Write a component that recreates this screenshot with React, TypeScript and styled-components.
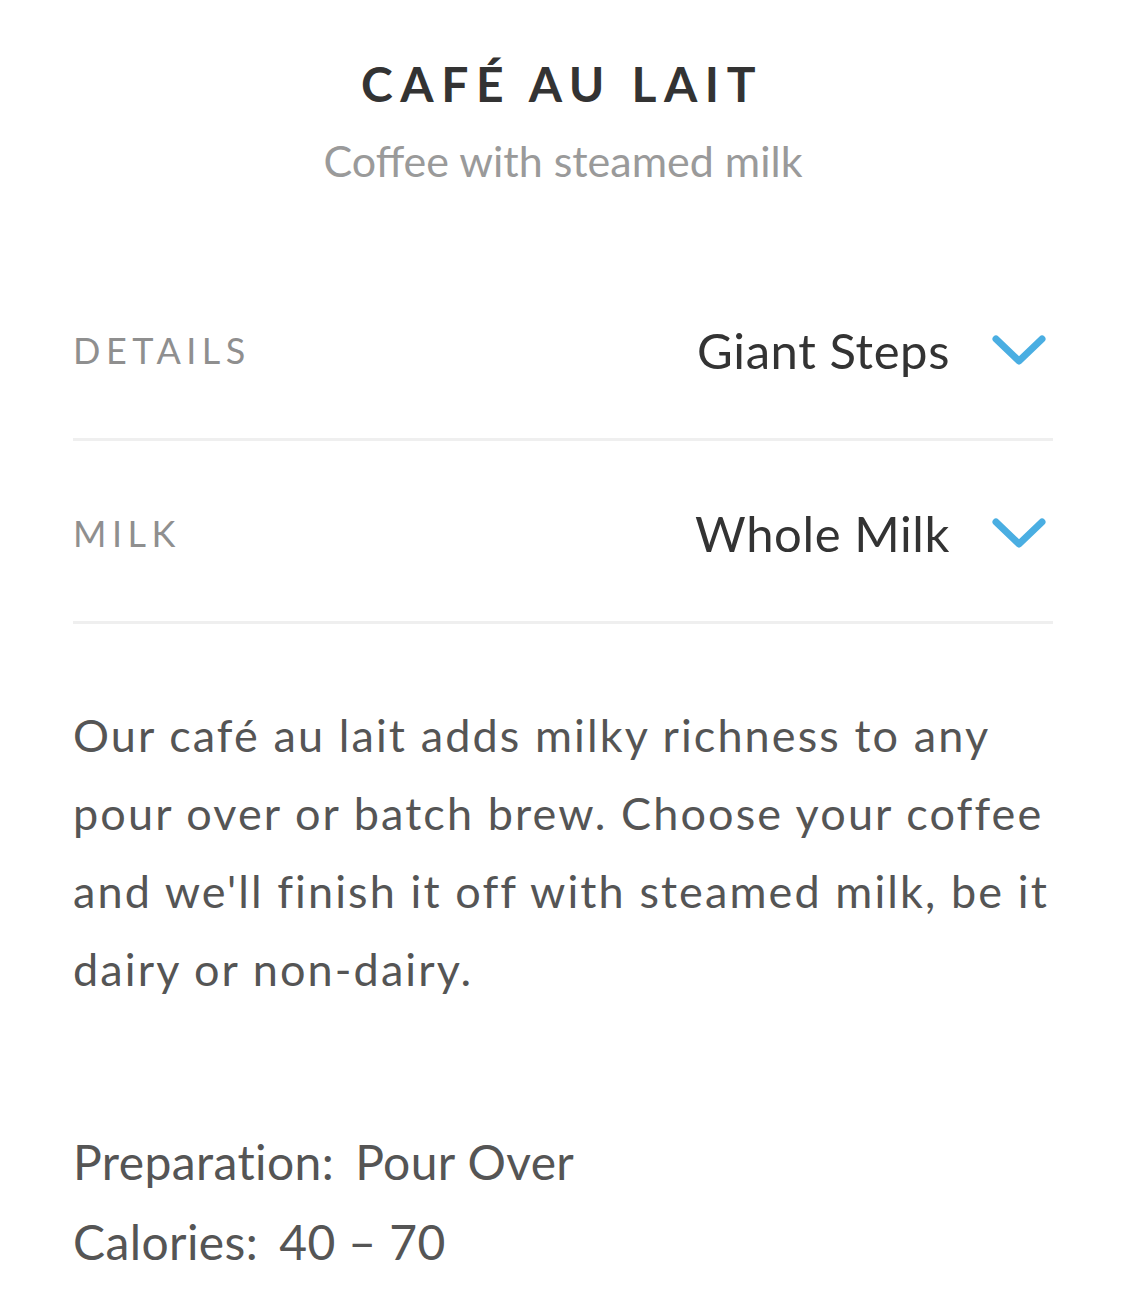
import React from "react";
import styled, { createGlobalStyle } from "styled-components";

const GlobalStyle = createGlobalStyle`
  html, body { margin: 0; padding: 0; background: #ffffff; }
  body { font-family: "Lato", "Noto Sans", sans-serif; -webkit-font-smoothing: antialiased; }
`;

const Page = styled.main`
  width: 1125px;
  box-sizing: border-box;
  padding: 60px 72px 40px 73px;
  display: flex;
  flex-direction: column;
`;

const Header = styled.header`
  display: flex;
  flex-direction: column;
  align-items: center;
  padding-bottom: 73px;
`;

const Title = styled.h1`
  margin: 0;
  font-size: 48px;
  line-height: 48px;
  font-weight: 700;
  letter-spacing: 7.6px;
  color: #333333;
  padding-right: 2px;
`;

const Subtitle = styled.p`
  margin: 29px 0 0;
  font-size: 43px;
  line-height: 48px;
  font-weight: 400;
  color: #9a9a9a;
`;

const OptionRow = styled.div`
  height: 176px;
  padding-top: 4px;
  display: flex;
  align-items: center;
  justify-content: space-between;
  border-bottom: 3px solid #efefef;
`;

const Label = styled.span`
  font-size: 36px;
  letter-spacing: 5.5px;
  color: #8f8f8f;
  font-weight: 400;
`;

const Value = styled.button`
  display: flex;
  align-items: center;
  gap: 42px;
  background: none;
  border: 0;
  padding: 0 7px 0 0;
  font: inherit;
  font-size: 49px;
  letter-spacing: 0.6px;
  color: #333333;
  cursor: pointer;
`;

const Chevron = () => (
  <svg width="54" height="30" viewBox="0 0 54 30" fill="none">
    <polyline
      points="4,4 27,26 50,4"
      stroke="#4aaee2"
      strokeWidth="7"
      strokeLinecap="round"
      strokeLinejoin="round"
    />
  </svg>
);

const Description = styled.p`
  margin: 72px 0 0;
  font-size: 45px;
  line-height: 78px;
  color: #555555;
  letter-spacing: 2.1px;
`;

const Line = styled.span`
  display: block;
  white-space: nowrap;
`;

const Facts = styled.dl`
  margin: 114px 0 0;
  display: flex;
  flex-direction: column;
`;

const Fact = styled.div`
  display: flex;
  gap: 21px;
  font-size: 48px;
  line-height: 80px;
  letter-spacing: 0.4px;
  color: #555555;
`;

const FactTerm = styled.dt`
  margin: 0;
`;

const FactValue = styled.dd`
  margin: 0;
`;

export default function App() {
  return (
    <>
      <GlobalStyle />
      <Page>
        <Header>
          <Title>CAFÉ AU LAIT</Title>
          <Subtitle>Coffee with steamed milk</Subtitle>
        </Header>
        <OptionRow>
          <Label>DETAILS</Label>
          <Value>
            Giant Steps
            <Chevron />
          </Value>
        </OptionRow>
        <OptionRow>
          <Label>MILK</Label>
          <Value>
            Whole Milk
            <Chevron />
          </Value>
        </OptionRow>
        <Description>
          <Line>Our café au lait adds milky richness to any</Line>
          <Line>pour over or batch brew. Choose your coffee</Line>
          <Line>and we'll finish it off with steamed milk, be it</Line>
          <Line>dairy or non-dairy.</Line>
        </Description>
        <Facts>
          <Fact>
            <FactTerm>Preparation:</FactTerm>
            <FactValue>Pour Over</FactValue>
          </Fact>
          <Fact>
            <FactTerm>Calories:</FactTerm>
            <FactValue>40 – 70</FactValue>
          </Fact>
        </Facts>
      </Page>
    </>
  );
}
